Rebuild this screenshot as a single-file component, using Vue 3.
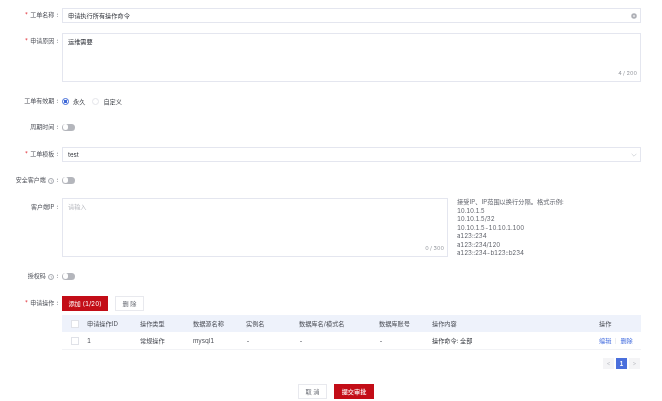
<template>
  <div class="page">
    <form class="form" @submit.prevent>
      <div class="row r-name">
        <label class="label"><i>*</i>工单名称<span class="colon">:</span></label>
        <div class="control input">
          <span class="value">申请执行所有操作命令</span>
          <svg class="clear" viewBox="0 0 12 12"><circle cx="6" cy="6" r="5.5" fill="#aeb0b6"/><circle cx="6" cy="6" r="2" fill="#e8e8ea"/></svg>
        </div>
      </div>
      <div class="row r-reason">
        <label class="label"><i>*</i>申请原因<span class="colon">:</span></label>
        <div class="control area">
          <span class="value">运维需要</span>
          <span class="count">4 / 200</span>
        </div>
      </div>
      <div class="row r-valid">
        <label class="label">工单有效期<span class="colon">:</span></label>
        <div class="radios">
          <span class="radio on"></span><span class="radio-text">永久</span>
          <span class="radio off"></span><span class="radio-text">自定义</span>
        </div>
      </div>
      <div class="row r-period">
        <label class="label">周期时间<span class="colon">:</span></label>
        <span class="switch"></span>
      </div>
      <div class="row r-tpl">
        <label class="label"><i>*</i>工单模板<span class="colon">:</span></label>
        <div class="control input">
          <span class="value">test</span>
          <svg class="chev" viewBox="0 0 10 6"><path d="M1 1l4 4 4-4" fill="none" stroke="#b9bcc4" stroke-width=".9"/></svg>
        </div>
      </div>
      <div class="row r-safe">
        <label class="label">安全客户端<span class="q">?</span><span class="colon">:</span></label>
        <span class="switch"></span>
      </div>
      <div class="row r-ip">
        <label class="label">客户端IP<span class="colon">:</span></label>
        <div class="control area ip">
          <span class="placeholder">请输入</span>
          <span class="count">0 / 300</span>
        </div>
        <div class="help">
          <div v-for="line in helpLines" :key="line">{{ line }}</div>
        </div>
      </div>
      <div class="row r-auth">
        <label class="label">授权码<span class="q">?</span><span class="colon">:</span></label>
        <span class="switch"></span>
      </div>
      <div class="row r-ops">
        <label class="label"><i>*</i>申请操作<span class="colon">:</span></label>
        <div class="ops">
          <div class="op-buttons">
            <button class="btn primary add">添加 (1/20)</button>
            <button class="btn plain del">删 除</button>
          </div>
          <div class="table">
            <div class="tr th">
              <span class="c0"><span class="check"></span></span>
              <span class="c1">申请操作ID</span><span class="c2">操作类型</span><span class="c3">数据源名称</span>
              <span class="c4">实例名</span><span class="c5">数据库名/模式名</span><span class="c6">数据库账号</span>
              <span class="c7">操作内容</span><span class="c8">操作</span>
            </div>
            <div class="tr td">
              <span class="c0"><span class="check"></span></span>
              <span class="c1">1</span><span class="c2">常规操作</span><span class="c3">mysql1</span>
              <span class="c4">-</span><span class="c5">-</span><span class="c6">-</span>
              <span class="c7 dark">操作命令: 全部</span>
              <span class="c8"><a>编辑</a><b></b><a>删除</a></span>
            </div>
          </div>
          <div class="pager">
            <span class="pg">&lt;</span><span class="pg cur">1</span><span class="pg">&gt;</span>
          </div>
        </div>
      </div>
      <div class="footer">
        <button class="btn plain cancel">取 消</button>
        <button class="btn primary submit">提交审批</button>
      </div>
    </form>
  </div>
</template>

<script setup>
const helpLines = [
  '接受IP、IP范围以换行分隔。格式示例:',
  '10.10.1.5',
  '10.10.1.5/32',
  '10.10.1.5-10.10.1.100',
  'a123::234',
  'a123::234/120',
  'a123::234-b123::b234'
]
</script>

<style>
html, body { margin: 0; background: #fff; }
</style>

<style scoped>
.page {
  width: 662px;
  height: 401px;
  overflow: hidden;
  background: #fff;
  font-family: "Inter", "Noto Sans CJK SC", sans-serif;
  font-size: 6.2px;
  color: #43464d;
  font-variant-numeric: tabular-nums;
  filter: blur(0.3px);
}
.form { padding: 8px 21px 0 0; }
.row { display: flex; align-items: flex-start; }
.label {
  width: 58px;
  flex: none;
  margin-right: 4px;
  text-align: right;
  line-height: 14px;
  font-size: 6px;
  color: #50535b;
  white-space: nowrap;
}
.label i { color: #e0323a; font-style: normal; margin-right: 2px; }
.colon { margin-left: 2px; }
.q {
  display: inline-block;
  box-sizing: border-box;
  width: 6px;
  height: 6px;
  line-height: 5px;
  margin-left: 2.5px;
  border: .5px solid #a6a9b0;
  border-radius: 50%;
  text-align: center;
  font-size: 4px;
  color: #a6a9b0;
  vertical-align: -0.5px;
}
.control {
  flex: 1;
  min-width: 0;
  position: relative;
  box-sizing: border-box;
  border: 1px solid #e4e6ef;
  background: #fff;
  color: #33363d;
}
.input { height: 15px; line-height: 13px; padding: 0 3.5px 0 5px; display: flex; justify-content: space-between; align-items: center; }
.area { height: 49px; padding: 2.5px 5px; line-height: 9px; }
.r-reason { margin-top: 10px; }
.r-reason .label { line-height: 16px; }
.clear { width: 6px; height: 6px; }
.chev { width: 6px; height: 4px; }
.count {
  position: absolute;
  right: 3px;
  bottom: 4px;
  font-size: 5.4px;
  line-height: 8px;
  color: #94979e;
}
.r-valid { margin-top: 12px; height: 14px; }
.radios { display: flex; align-items: center; height: 14px; }
.radio {
  width: 7px;
  height: 7px;
  box-sizing: border-box;
  border-radius: 50%;
  border: 1px solid #e4e5ea;
  margin-right: 4px;
}
.radio.on { border-color: #3f69d8; background: radial-gradient(circle, #3f69d8 0 1.6px, #fff 1.9px); }
.radio.off { margin-left: 7px; }
.radio-text { color: #43464d; }
.r-period { margin-top: 12px; height: 14px; align-items: center; }
.switch {
  width: 13px;
  height: 7px;
  border-radius: 3.5px;
  background: #b4b6bc;
  position: relative;
  flex: none;
}
.switch::after {
  content: "";
  position: absolute;
  left: .75px;
  top: .75px;
  width: 5.5px;
  height: 5.5px;
  border-radius: 50%;
  background: #fff;
}
.r-tpl { margin-top: 13px; }
.r-safe { margin-top: 11px; height: 14px; align-items: center; }
.r-ip { margin-top: 11px; height: 59px; }
.r-ip .label { line-height: 18px; }
.ip { flex: none; width: 386px; height: 59px; line-height: 9px; }
.placeholder { color: #b8bac0; }
.help {
  margin-left: 9px;
  line-height: 8.5px;
  color: #62656d;
  white-space: nowrap;
  font-size: 6.2px;
  letter-spacing: -0.15px;
}
.help div:first-child { letter-spacing: 0.05px; }
.r-auth { margin-top: 12px; height: 14px; align-items: center; }
.r-ops { margin-top: 13px; }
.ops { flex: 1; min-width: 0; }
.op-buttons { display: flex; gap: 7px; height: 15px; }
.btn {
  font: inherit;
  box-sizing: border-box;
  padding: 0;
  height: 15px;
  border-radius: 0;
  cursor: pointer;
}
.primary { background: #c30d17; border: 1px solid #c30d17; color: #fff; }
.plain { background: #fff; border: 1px solid #e8e9ee; color: #6a6d75; }
.add { width: 46px; }
.del { width: 29px; }
.table { margin-top: 4px; }
.tr { display: flex; align-items: center; }
.th { height: 17px; background: #eef2fb; color: #4c4f57; }
.td { height: 18px; border-bottom: 1px solid #f2f3f6; box-sizing: border-box; color: #4a4d55; }
.c0 { width: 25px; flex: none; display: flex; justify-content: center; }
.c1 { width: 53px; flex: none; }
.c2, .c3, .c4, .c5 { width: 53px; flex: none; }
.c5 { width: 80px; }
.c6 { width: 53px; flex: none; }
.c7 { width: 167px; flex: none; }
.c8 { display: flex; align-items: center; }
.dark { color: #33363d; }
.c8 a { color: #4a72e0; }
.c8 b { width: 1px; height: 6px; background: #eceef2; margin: 0 4px; }
.check {
  width: 6px;
  height: 6px;
  border: 1px solid #e0e2e8;
  background: #fff;
  display: block;
}
.pager { display: flex; justify-content: flex-end; gap: 2px; margin-top: 8px; padding-right: 1px; }
.pg {
  width: 11px;
  height: 11px;
  line-height: 11px;
  text-align: center;
  background: #f4f4f6;
  color: #b8bac0;
}
.pg.cur { background: #4a6fdc; color: #fff; font-weight: 600; }
.footer { display: flex; justify-content: center; gap: 7px; margin-top: 15px; padding-left: 31px; }
.cancel { width: 29px; }
.submit { width: 40px; font-weight: 500; }
</style>
